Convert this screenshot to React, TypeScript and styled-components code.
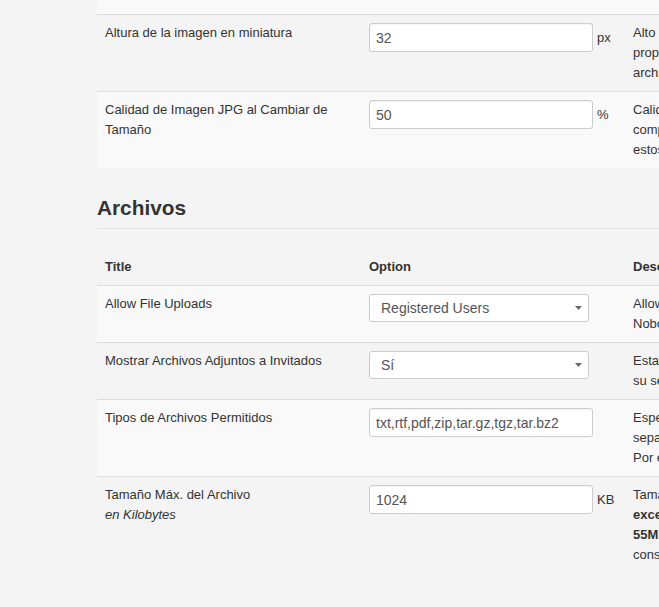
import React from 'react';
import styled, { createGlobalStyle } from 'styled-components';

const GlobalStyle = createGlobalStyle`
  html, body {
    margin: 0;
    padding: 0;
    background: #f4f4f4;
    overflow: hidden;
  }
  body {
    font-family: "Liberation Sans", Arial, sans-serif;
    font-size: 13px;
    color: #333;
  }
`;

type Field =
  | { kind: 'text'; value: string; unit?: string }
  | { kind: 'select'; value: string; options: string[] };

type Setting = {
  title: string;
  hint?: string;
  field: Field;
  description: React.ReactNode[];
};

const imageSettings: Setting[] = [
  {
    title: 'Ancho de la imagen en miniatura',
    field: { kind: 'text', value: '32', unit: 'px' },
    description: [
      'Ancho de la imagen en miniatura. La imagen se redimensiona de forma',
      'proporcional, manteniendo la relación de aspecto del',
      'archivo original.',
    ],
  },
  {
    title: 'Altura de la imagen en miniatura',
    field: { kind: 'text', value: '32', unit: 'px' },
    description: [
      'Alto de la imagen en miniatura. La imagen se redimensiona de forma',
      'proporcional, manteniendo la relación de aspecto del',
      'archivo original.',
    ],
  },
  {
    title: 'Calidad de Imagen JPG al Cambiar de Tamaño',
    field: { kind: 'text', value: '50', unit: '%' },
    description: [
      'Calidad de la imagen JPG al cambiar de tamaño. Un valor bajo significa',
      'compresión alta y archivos más pequeños. Los cambios en',
      'estos ajustes no afectan a las imágenes ya subidas.',
    ],
  },
];

const fileSettings: Setting[] = [
  {
    title: 'Allow File Uploads',
    field: { kind: 'select', value: 'Registered Users', options: ['Everybody', 'Registered Users', 'Nobody'] },
    description: ['Allow file uploads for: Everybody, Registered Users or', 'Nobody.'],
  },
  {
    title: 'Mostrar Archivos Adjuntos a Invitados',
    field: { kind: 'select', value: 'Sí', options: ['Sí', 'No'] },
    description: [
      'Establezca en «Sí» si desea mostrar los archivos adjuntos a invitados sin',
      'su sesión iniciada.',
    ],
  },
  {
    title: 'Tipos de Archivos Permitidos',
    field: { kind: 'text', value: 'txt,rtf,pdf,zip,tar.gz,tgz,tar.bz2' },
    description: [
      'Especifique las extensiones de archivo permitidas,',
      'separadas por comas (sin espacios).',
      'Por ejemplo: txt,rtf,pdf,zip',
    ],
  },
  {
    title: 'Tamaño Máx. del Archivo',
    hint: 'en Kilobytes',
    field: { kind: 'text', value: '1024', unit: 'KB' },
    description: [
      'Tamaño máximo del archivo en Kilobytes. No puede',
      <b key="b1">exceder el límite del servidor de</b>,
      <span key="b2"><b>55M</b>. Si necesita subir archivos mayores,</span>,
      'consulte a su administrador.',
    ],
  },
];

const Page = styled.div`
  width: 900px;
  margin-top: -63px;
  padding-left: 97px;
`;

const SettingsTable = styled.table<{ $spaced?: boolean }>`
  width: 860px;
  table-layout: fixed;
  border-collapse: separate;
  border-spacing: 0;
  margin-top: ${(p) => (p.$spaced ? '20px' : '0')};

  tbody tr:nth-child(odd) {
    background: #f9f9f9;
  }
`;

const Col = styled.col<{ $w: number }>`
  width: ${(p) => p.$w}px;
`;

const HeadCell = styled.th`
  padding: 8px;
  text-align: left;
  font-weight: bold;
  line-height: 20px;
  vertical-align: bottom;
`;

const Cell = styled.td`
  padding: 8px;
  line-height: 20px;
  vertical-align: top;
  border-top: 1px solid #ddd;
`;

const Hint = styled.em`
  display: block;
  font-style: italic;
`;

const SectionTitle = styled.h2`
  margin: 28px 0 0;
  padding-bottom: 9px;
  font-size: 20.8px;
  line-height: 23px;
  font-weight: bold;
  color: #333;
  border-bottom: 1px solid #e5e5e5;
`;

const FieldGroup = styled.div`
  display: flex;
  align-items: center;
  gap: 4px;
`;

const TextInput = styled.input`
  box-sizing: border-box;
  width: 224px;
  height: 29px;
  padding: 0 6px;
  border: 1px solid #ccc;
  border-radius: 3px;
  background: #fff;
  box-shadow: inset 0 1px 1px rgba(0, 0, 0, 0.05);
  font-family: "Liberation Sans", Arial, sans-serif;
  font-size: 14px;
  color: #555;
  outline: none;
`;

const SelectBox = styled.div`
  position: relative;
  width: 220px;
`;

const Select = styled.select`
  box-sizing: border-box;
  appearance: none;
  width: 100%;
  height: 28px;
  padding: 0 22px 0 11px;
  border: 1px solid #ccc;
  border-radius: 3px;
  background: #fff;
  font-family: "Liberation Sans", Arial, sans-serif;
  font-size: 14px;
  color: #555;
  outline: none;
`;

const Caret = styled.svg`
  position: absolute;
  right: 7px;
  top: 12px;
  pointer-events: none;
`;

const Unit = styled.span`
  font-size: 13px;
  color: #333;
`;

const DescLine = styled.div`
  white-space: nowrap;
`;

const FieldControl = ({ field }: { field: Field }) => {
  if (field.kind === 'select') {
    return (
      <SelectBox>
        <Select defaultValue={field.value}>
          {field.options.map((o) => (
            <option key={o}>{o}</option>
          ))}
        </Select>
        <Caret width="7" height="4" viewBox="0 0 7 4">
          <path d="M0 0h7L3.5 4z" fill="#6a6a6a" />
        </Caret>
      </SelectBox>
    );
  }
  return (
    <FieldGroup>
      <TextInput type="text" defaultValue={field.value} />
      {field.unit && <Unit>{field.unit}</Unit>}
    </FieldGroup>
  );
};

const SettingRows = ({ rows }: { rows: Setting[] }) => (
  <tbody>
    {rows.map((s) => (
      <tr key={s.title}>
        <Cell>
          {s.title}
          {s.hint && <Hint>{s.hint}</Hint>}
        </Cell>
        <Cell>
          <FieldControl field={s.field} />
        </Cell>
        <Cell>
          {s.description.map((line, i) => (
            <DescLine key={i}>{line}</DescLine>
          ))}
        </Cell>
      </tr>
    ))}
  </tbody>
);

const Columns = () => (
  <colgroup>
    <Col $w={264} />
    <Col $w={264} />
    <Col $w={332} />
  </colgroup>
);

export default function App() {
  return (
    <>
      <GlobalStyle />
      <Page>
        <SettingsTable>
          <Columns />
          <SettingRows rows={imageSettings} />
        </SettingsTable>

        <SectionTitle>Archivos</SectionTitle>

        <SettingsTable $spaced>
          <Columns />
          <thead>
            <tr>
              <HeadCell>Title</HeadCell>
              <HeadCell>Option</HeadCell>
              <HeadCell>Description</HeadCell>
            </tr>
          </thead>
          <SettingRows rows={fileSettings} />
        </SettingsTable>
      </Page>
    </>
  );
}
